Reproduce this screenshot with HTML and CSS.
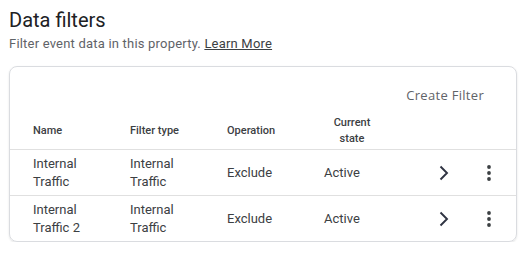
FILE: index.html
```html
<!DOCTYPE html>
<html lang="en">
<head>
    <meta charset="UTF-8">
    <meta name="viewport" content="width=device-width, initial-scale=1.0">
    <title>Data filters</title>
    <link rel="stylesheet" href="styles.css">
</head>
<body>

    <h1 class="page-title">Data filters</h1>
    <p class="page-desc">Filter event data in this property. <a href="#" class="learn-link">Learn More</a></p>

    <div class="card">
        <div class="toolbar">
            <button class="create-btn">Create Filter</button>
        </div>

        <div class="grid-row head-row">
            <div>Name</div>
            <div>Filter type</div>
            <div>Operation</div>
            <div class="state-head">Current state</div>
            <div></div>
            <div></div>
        </div>

        <div class="grid-row data-row">
            <div>Internal<br>Traffic</div>
            <div>Internal<br>Traffic</div>
            <div>Exclude</div>
            <div>Active</div>
            <div class="icon-cell">
                <svg width="24" height="24" viewBox="0 0 24 24"><path d="M8.5 5.5l6.5 6.5-6.5 6.5" fill="none" stroke="#2f3342" stroke-width="1.9"/></svg>
            </div>
            <div class="icon-cell">
                <svg width="24" height="24" viewBox="0 0 24 24"><circle cx="12" cy="6" r="1.9"/><circle cx="12" cy="12" r="1.9"/><circle cx="12" cy="18" r="1.9"/></svg>
            </div>
        </div>

        <div class="grid-row data-row">
            <div>Internal<br>Traffic 2</div>
            <div>Internal<br>Traffic</div>
            <div>Exclude</div>
            <div>Active</div>
            <div class="icon-cell">
                <svg width="24" height="24" viewBox="0 0 24 24"><path d="M8.5 5.5l6.5 6.5-6.5 6.5" fill="none" stroke="#2f3342" stroke-width="1.9"/></svg>
            </div>
            <div class="icon-cell">
                <svg width="24" height="24" viewBox="0 0 24 24"><circle cx="12" cy="6" r="1.9"/><circle cx="12" cy="12" r="1.9"/><circle cx="12" cy="18" r="1.9"/></svg>
            </div>
        </div>
    </div>

</body>
</html>
```

FILE: styles.css
```css
body {
    margin: 0;
    padding: 0 9px;
    font-family: Roboto, 'Liberation Sans', sans-serif;
    color: #3c4043;
    background: white;
}
.page-title {
    margin: 6px 0 0;
    font-size: 20px;
    line-height: 28px;
    font-weight: 400;
    color: #202124;
}
.page-desc {
    margin: 0;
    font-size: 13px;
    line-height: 20px;
    letter-spacing: 0.2px;
    color: #5f6368;
}
.learn-link {
    color: #3c4043;
    text-decoration: underline;
}
.card {
    margin-top: 12px;
    width: 506px;
    border: 1px solid #dadce0;
    border-radius: 8px;
    box-shadow: 0 1px 2px rgba(60, 64, 67, 0.15);
}
.toolbar {
    display: flex;
    justify-content: flex-end;
    padding: 10px 22px 0 0;
}
.create-btn {
    height: 36px;
    padding: 0 10px;
    border: none;
    background: none;
    font-family: 'Open Sans', Roboto, sans-serif;
    font-size: 13px;
    font-weight: 500;
    color: #5f6368;
    letter-spacing: 0.3px;
    cursor: pointer;
}
.grid-row {
    display: grid;
    grid-template-columns: 97px 97px 97px 96px 48px 42px;
    align-items: center;
    padding-left: 23px;
}
.head-row {
    height: 36px;
    font-size: 11px;
    line-height: 16px;
    font-weight: 500;
    color: #3c4043;
    border-bottom: 1px solid #e0e0e0;
}
.state-head {
    width: 56px;
    text-align: center;
}
.data-row {
    height: 45px;
    font-size: 13px;
    line-height: 18px;
    color: #3c4043;
}
.data-row + .data-row {
    border-top: 1px solid #e0e0e0;
}
.icon-cell {
    display: flex;
    justify-content: center;
}
.icon-cell svg {
    fill: #3c4043;
}
```
